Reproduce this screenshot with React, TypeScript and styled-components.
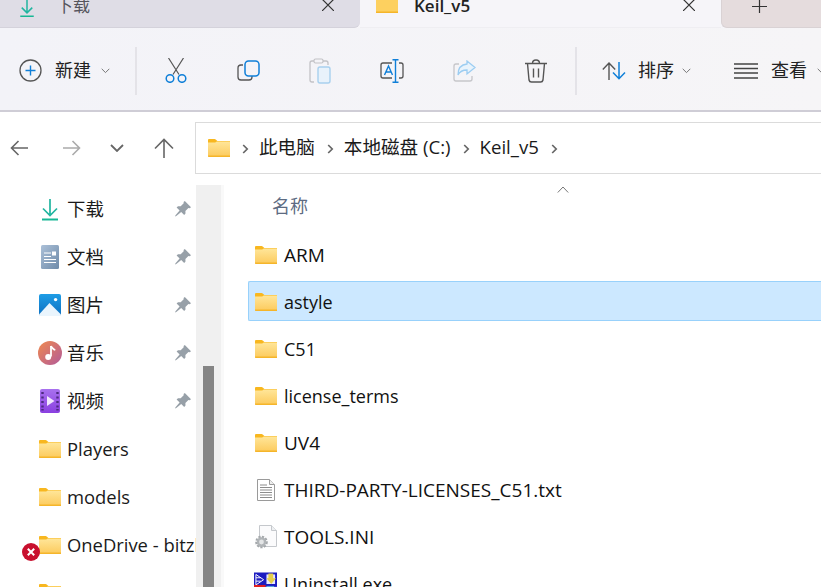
import styled, { createGlobalStyle } from "styled-components";

const Global = createGlobalStyle`
  html, body {
    margin: 0;
    padding: 0;
    background: #fff;
    overflow: hidden;
  }
  * { box-sizing: border-box; }
`;

const Window = styled.div`
  width: 821px;
  height: 587px;
  overflow: hidden;
  font-family: "Open Sans", "Noto Sans CJK SC", sans-serif;
  color: #1a1a1a;
  display: flex;
  flex-direction: column;
`;

const TabBar = styled.div`
  height: 28px;
  flex: none;
  display: flex;
  background: #f6f5f9;
`;

const Tab = styled.div<{ $active?: boolean }>`
  width: ${p => (p.$active ? 361 : 360)}px;
  display: flex;
  align-items: flex-end;
  position: relative;
  background: ${p => (p.$active ? "#f6f5f9" : "#dfdde6")};
  border-bottom-right-radius: ${p => (p.$active ? 0 : 6)}px;
  border-bottom: ${p => (p.$active ? "1px solid #efeef2" : "1px solid #d4d2db")};
  padding: 0 0 10px ${p => (p.$active ? 16 : 18)}px;
`;

const TabTitle = styled.span<{ $active?: boolean }>`
  font-size: 17px;
  line-height: 22px;
  margin-left: ${p => (p.$active ? 16 : 20)}px;
  font-weight: ${p => (p.$active ? 600 : 400)};
  color: ${p => (p.$active ? "#222" : "#55545c")};
`;

const TabFolder = styled.svg`
  margin-bottom: 4px;
`;

const TabClose = styled.svg`
  position: absolute;
  right: 26px;
  top: 0;
`;

const NewTab = styled.div`
  flex: 1;
  background: #e5dcdd;
  border-bottom-left-radius: 6px;
  border-bottom: 1px solid #d9d2d4;
  border-left: 1px solid #d9d2d4;
  padding-left: 30px;
  line-height: 0;
`;

const Toolbar = styled.div`
  height: 84px;
  flex: none;
  display: flex;
  align-items: center;
  background: linear-gradient(90deg, #f3f3f8, #f6f5f7);
  border-bottom: 2px solid #cfcdd6;
  padding: 3px 0 0 19px;
`;

const ToolLabel = styled.span`
  font-size: 18px;
  line-height: 24px;
  color: #222;
  margin-bottom: 2px;
`;

const Chevron = styled.svg`
  margin-left: -3px;
`;

const ToolGroup = styled.div<{ $width: number; $inset?: number; $gap?: number }>`
  width: ${p => p.$width}px;
  display: flex;
  align-items: center;
  gap: ${p => p.$gap ?? 13}px;
  flex: none;
  padding-left: ${p => p.$inset ?? 0}px;
`;

const Divider = styled.div`
  width: 2px;
  height: 48px;
  background: #e4e3e8;
  flex: none;
`;

const ToolIcon = styled.div<{ $width: number }>`
  width: ${p => p.$width}px;
  flex: none;
  display: flex;
  justify-content: center;
`;

const NavRow = styled.div`
  height: 63px;
  flex: none;
  display: flex;
  align-items: flex-start;
  padding-top: 10px;
`;

const NavButtons = styled.div`
  width: 195px;
  height: 52px;
  flex: none;
  display: flex;
  align-items: center;
  padding-left: 10px;
`;

const NavButton = styled.div<{ $width: number; $inset?: number }>`
  width: ${p => p.$width}px;
  flex: none;
  display: flex;
  align-items: center;
  padding-left: ${p => p.$inset ?? 0}px;
`;

const Breadcrumb = styled.div`
  flex: 1;
  height: 52px;
  border: 1px solid #dbdbdb;
  border-right: none;
  display: flex;
  align-items: center;
  padding-left: 12px;
  font-size: 18.6px;
`;

const CrumbText = styled.span`
  line-height: 24px;
  color: #1a1a1a;
  margin-bottom: 2px;
`;

const CrumbArrow = styled.svg`
  margin: 2px 10px 0 12px;
  flex: none;
`;

const Crumb = styled.span`
  display: contents;
`;

const Body = styled.div`
  flex: 1;
  min-height: 0;
  display: flex;
  padding-top: 10px;
`;

const Sidebar = styled.div`
  width: 196px;
  flex: none;
  overflow: hidden;
`;

const NavItem = styled.div`
  height: 48px;
  display: flex;
  align-items: center;
  position: relative;
  padding-left: 38px;
  font-size: 18.4px;
  white-space: nowrap;
`;

const NavLabel = styled.span`
  margin-bottom: 2px;
`;

const NavIconBox = styled.div`
  width: 24px;
  height: 24px;
  flex: none;
  display: flex;
  align-items: center;
  justify-content: center;
  margin-right: 5px;
`;

const PinBox = styled.svg`
  position: absolute;
  left: 175px;
  top: 16px;
`;

const ErrorBadge = styled.svg`
  position: absolute;
  left: 22px;
  top: 22px;
`;

const Scrollbar = styled.div`
  width: 25px;
  flex: none;
  background: #f0f0f0;
  padding: 181px 7px 0;
`;

const ScrollThumb = styled.div`
  height: 100%;
  background: #858585;
`;

const Gutter = styled.div`
  width: 3px;
  flex: none;
  background: #f9f9f9;
`;

const FileArea = styled.div`
  flex: 1;
  min-width: 0;
  padding-left: 24px;
`;

const ColumnHeader = styled.div`
  height: 49px;
  position: relative;
  padding: 9px 0 0 24px;
  font-size: 18px;
  line-height: 24px;
  color: #5d6b82;
`;

const SortCaret = styled.svg`
  position: absolute;
  left: 309px;
  top: 1px;
`;

const FileRow = styled.div<{ $selected?: boolean }>`
  height: 40px;
  margin-bottom: 7px;
  display: flex;
  align-items: center;
  padding: 2px 0 0 5px;
  white-space: nowrap;
  border-radius: 2px 0 0 2px;
  border: 1px solid ${p => (p.$selected ? "#98d1fb" : "transparent")};
  border-right: none;
  background: ${p => (p.$selected ? "#cce8ff" : "transparent")};
  color: #111;
`;

const FileName = styled.span<{ $caps?: boolean }>`
  font-size: ${p => (p.$caps ? 19 : 18)}px;
`;

const FileIconBox = styled.div`
  width: 23px;
  flex: none;
  margin-right: 7px;
  display: flex;
  justify-content: center;
`;

const FolderIcon = () => (
  <svg width="22" height="18" viewBox="0 0 22 18">
    <defs>
      <linearGradient id="fld" x1="0" y1="0" x2="0" y2="1">
        <stop offset="0" stopColor="#ffe69a" />
        <stop offset="1" stopColor="#fccb5e" />
      </linearGradient>
    </defs>
    <path d="M0 1.200C0 .5.5 0 1.200 0h5.400c.5 0 .8.2 1.100.5L9.400 2H22v2H0z" fill="#f8b71f" />
    <path d="M0 3.400h7.200l1.600-1H22v15H1c-.6 0-1-.4-1-1z" fill="url(#fld)" />
    <path d="M0 16.400h22V18H1c-.6 0-1-.4-1-1z" fill="#f5b52a" />
  </svg>
);

const DownloadIcon = ({ size = 24 }: { size?: number }) => (
  <svg width={size} height={size} viewBox="0 0 24 24" fill="none" strokeWidth="1.700">
    <path d="M12 2v16M5 11.500l7 7 7-7" stroke="#22b5a0" />
    <path d="M4 22.500h16" stroke="#17b794" strokeWidth="2" />
  </svg>
);

const DocIcon = () => (
  <svg width="18" height="24" viewBox="0 0 18 24">
    <defs>
      <linearGradient id="doc" x1="0" y1="0" x2="1" y2="1">
        <stop offset="0" stopColor="#abc0d8" />
        <stop offset="1" stopColor="#6f8ba9" />
      </linearGradient>
    </defs>
    <rect width="18" height="24" rx="1.500" fill="url(#doc)" />
    <path d="M3 8h7M3 11.500h7M3 14.500h12M3 17.500h12" stroke="#fff" strokeWidth="1" />
    <rect x="11" y="6.500" width="4" height="4" fill="#fff" />
  </svg>
);

const PictureIcon = () => (
  <svg width="22" height="22" viewBox="0 0 22 22">
    <defs>
      <linearGradient id="pic" x1="0" y1="0" x2="0" y2="1">
        <stop offset="0" stopColor="#1f9de6" />
        <stop offset="1" stopColor="#0c6fc0" />
      </linearGradient>
    </defs>
    <rect width="22" height="22" rx="2" fill="url(#pic)" />
    <circle cx="16.600" cy="5.600" r="1.700" fill="#fff" />
    <path d="M0 20.500L10.500 9 22 20.500V22H0z" fill="#eaf5fd" />
  </svg>
);

const MusicIcon = () => (
  <svg width="24" height="24" viewBox="0 0 24 24">
    <defs>
      <linearGradient id="mus" x1="0" y1="0" x2="1" y2="1">
        <stop offset="0" stopColor="#f08a4e" />
        <stop offset="1" stopColor="#b25a9a" />
      </linearGradient>
    </defs>
    <circle cx="12" cy="12" r="12" fill="url(#mus)" />
    <path d="M13 5v10.500" stroke="#fff" strokeWidth="1.800" />
    <path d="M13 5c.6 2.400 3 2.600 4 4.400" stroke="#fff" strokeWidth="1.800" fill="none" />
    <circle cx="10.200" cy="16" r="3" fill="#fff" />
  </svg>
);

const VideoIcon = () => (
  <svg width="20" height="24" viewBox="0 0 20 24">
    <defs>
      <linearGradient id="vid" x1="0" y1="0" x2="0" y2="1">
        <stop offset="0" stopColor="#a871ee" />
        <stop offset="1" stopColor="#8a3fe0" />
      </linearGradient>
    </defs>
    <rect width="20" height="24" rx="2" fill="url(#vid)" />
    <path d="M7 7l7.500 5L7 17z" fill="#f1e6fd" />
    <path d="M2.500 3v2M2.500 7.500v2M2.500 12v2M2.500 16.500v2M2.500 20v1.500M17.500 3v2M17.500 7.500v2M17.500 12v2M17.500 16.500v2M17.500 20v1.500" stroke="#4d2a80" strokeWidth="2.400" />
  </svg>
);

const PinIcon = () => (
  <PinBox width="16" height="16" viewBox="0 0 16 16">
    <path d="M9.800 0L16 6.200l-1.300 1-1.300-.3-3 3 .1 2.700-1.300 1.300-3-3L1.300 15 0 15.500l.5-1.300 4.100-4.600-3-3L3 5.200l2.700.1 3-3L8.600 1z" fill="#97a0a8" />
  </PinBox>
);

const TextFileIcon = () => (
  <svg width="18" height="22" viewBox="0 0 18 22">
    <path d="M.5.5h12l5 5v16H.5z" fill="#fff" stroke="#9a9a9a" />
    <path d="M12.500.5v5h5" fill="#eee" stroke="#9a9a9a" />
    <path d="M3 6h7M3 8.500h12M3 11h12M3 13.500h12M3 16h12M3 18.500h12" stroke="#8c8c8c" />
  </svg>
);

const IniFileIcon = () => (
  <svg width="22" height="24" viewBox="0 0 22 24">
    <path d="M4.500.5h12l5 5v16h-17z" fill="#fbfbfc" stroke="#c5c8cc" />
    <path d="M16.500.5v5h5" fill="#eef0f2" stroke="#c5c8cc" />
    <circle cx="6.500" cy="17" r="4.800" fill="none" stroke="#a3a7aa" strokeWidth="3" strokeDasharray="2 1.200" />
    <circle cx="6.500" cy="17" r="3.600" fill="#e3e5e6" stroke="#b0b4b7" strokeWidth="2.400" />
  </svg>
);

const UninstallIcon = () => (
  <svg width="24" height="24" viewBox="0 0 24 24">
    <rect width="24" height="15" fill="#1c1cc0" />
    <path d="M2 2l8 5.500L2 13z" fill="none" stroke="#fff" />
    <path d="M2 5.500h5M2 9h5" stroke="#fff" />
    <rect x="13" y="2" width="9" height="10" fill="#e8e8ff" />
    <path d="M15 1h5v5h3l-5 6-5-6h2z" fill="#e6d04a" />
    <rect y="13" width="12" height="4" fill="#e02020" />
    <rect x="13" y="14" width="8" height="5" fill="#59a8dc" />
  </svg>
);

const ChevronDown = () => (
  <Chevron width="9" height="6" viewBox="0 0 9 6" fill="none" stroke="#777" strokeWidth="1">
    <path d="M.7.8l3.800 3.800L8.300.8" />
  </Chevron>
);

const sideItems = [
  { label: "下载", icon: <DownloadIcon />, pinned: true },
  { label: "文档", icon: <DocIcon />, pinned: true },
  { label: "图片", icon: <PictureIcon />, pinned: true },
  { label: "音乐", icon: <MusicIcon />, pinned: true },
  { label: "视频", icon: <VideoIcon />, pinned: true },
  { label: "Players", icon: <FolderIcon /> },
  { label: "models", icon: <FolderIcon /> },
  { label: "OneDrive - bitzhuwei", icon: <FolderIcon />, error: true },
  { label: "Pictures", icon: <FolderIcon /> },
];

const files = [
  { name: "ARM", icon: <FolderIcon />, caps: true },
  { name: "astyle", icon: <FolderIcon />, selected: true },
  { name: "C51", icon: <FolderIcon /> },
  { name: "license_terms", icon: <FolderIcon /> },
  { name: "UV4", icon: <FolderIcon />, caps: true },
  { name: "THIRD-PARTY-LICENSES_C51.txt", icon: <TextFileIcon />, caps: true },
  { name: "TOOLS.INI", icon: <IniFileIcon />, caps: true },
  { name: "Uninstall.exe", icon: <UninstallIcon /> },
];

const crumbs = ["此电脑", "本地磁盘 (C:)", "Keil_v5"];

const Arrow = () => (
  <CrumbArrow width="7" height="10" viewBox="0 0 7 10" fill="none" stroke="#666" strokeWidth="1.700">
    <path d="M1.200 1l4 4-4 4" />
  </CrumbArrow>
);

export default function App() {
  return (
    <Window>
      <Global />
      <TabBar>
        <Tab>
          <svg width="18" height="18" viewBox="0 0 24 24" fill="none" strokeWidth="2">
            <path d="M12 0v18M5 11.500l7 7 7-7" stroke="#22b5a0" />
            <path d="M3 23h18" stroke="#17b794" />
          </svg>
          <TabTitle>下载</TabTitle>
          <TabClose width="12" height="11" viewBox="0 0 12 11" stroke="#333" strokeWidth="1.200">
            <path d="M0-1l12 12M12-1L0 11" />
          </TabClose>
        </Tab>
        <Tab $active>
          <TabFolder width="22" height="13" viewBox="0 0 22 13">
            <path d="M0 0h22v13H0z" fill="#fdd05f" />
            <path d="M0 11.500h22V13H0z" fill="#f5b52a" />
          </TabFolder>
          <TabTitle $active>Keil_v5</TabTitle>
          <TabClose width="12" height="11" viewBox="0 0 12 11" stroke="#333" strokeWidth="1.200">
            <path d="M0-1l12 12M12-1L0 11" />
          </TabClose>
        </Tab>
        <NewTab>
          <svg width="15" height="14" viewBox="0 0 15 14" stroke="#333" strokeWidth="1.200">
            <path d="M7.500 0v13M0 6.500h15" />
          </svg>
        </NewTab>
      </TabBar>

      <Toolbar>
        <ToolGroup $width={116}>
          <svg width="23" height="23" viewBox="0 0 23 23" fill="none">
            <circle cx="11.500" cy="11.500" r="10.500" stroke="#555" strokeWidth="1.300" />
            <path d="M11.500 6.500v10M6.500 11.500h10" stroke="#0f7fd8" strokeWidth="1.400" />
          </svg>
          <ToolLabel>新建</ToolLabel>
          <ChevronDown />
        </ToolGroup>
        <Divider />
        <ToolIcon $width={78}>
          <svg width="22" height="25" viewBox="0 0 22 25" fill="none">
            <path d="M3.500 0L14 16.500M18.500 0L8 16.500" stroke="#555" strokeWidth="1.200" />
            <circle cx="5" cy="20.500" r="3.800" stroke="#0f7fd8" strokeWidth="1.500" />
            <circle cx="17" cy="20.500" r="3.800" stroke="#0f7fd8" strokeWidth="1.500" />
          </svg>
        </ToolIcon>
        <ToolIcon $width={66}>
          <svg width="23" height="21" viewBox="0 0 23 21" fill="none">
            <path d="M6 5H4a3 3 0 0 0-3 3v9a3 3 0 0 0 3 3h8a3 3 0 0 0 3-3v-1" stroke="#555" strokeWidth="1.300" />
            <rect x="8" y="1" width="14" height="15" rx="3.500" stroke="#0f7fd8" strokeWidth="1.500" />
          </svg>
        </ToolIcon>
        <ToolIcon $width={78}>
          <svg width="22" height="26" viewBox="0 0 22 26" fill="none">
            <path d="M5 3H3a2 2 0 0 0-2 2v17a2 2 0 0 0 2 2h2" stroke="#c2c2c6" strokeWidth="1.300" />
            <path d="M14 3h3a2 2 0 0 1 2 2v2" stroke="#c2c2c6" strokeWidth="1.300" />
            <rect x="5" y="1" width="9" height="4" rx="1.500" stroke="#c2c2c6" strokeWidth="1.200" />
            <rect x="9" y="9" width="12" height="16" rx="2" stroke="#a8d0ee" strokeWidth="1.400" fill="#e8f2fb" />
          </svg>
        </ToolIcon>
        <ToolIcon $width={66}>
          <svg width="24" height="24" viewBox="0 0 24 24" fill="none">
            <path d="M12 4H3a2 2 0 0 0-2 2v11a2 2 0 0 0 2 2h9M19 4h2a2 2 0 0 1 2 2v11a2 2 0 0 1-2 2h-2" stroke="#555" strokeWidth="1.300" />
            <path d="M4.500 16L8.500 7l4 9M6 13h5.200M15.500 0v24M12.500.7h6M12.500 23.300h6" stroke="#0f7fd8" strokeWidth="1.400" />
          </svg>
        </ToolIcon>
        <ToolIcon $width={78}>
          <svg width="23" height="22" viewBox="0 0 23 22" fill="none">
            <path d="M6 4H3a2 2 0 0 0-2 2v13a2 2 0 0 0 2 2h14a2 2 0 0 0 2-2v-3" stroke="#c6c6ca" strokeWidth="1.300" />
            <path d="M14 1l8 6.500-8 6.500V10C9 10 6.500 12 5 15c0-6 3-10.500 9-11z" stroke="#9ccdf2" strokeWidth="1.300" fill="#e8f3fc" />
          </svg>
        </ToolIcon>
        <ToolIcon $width={66}>
          <svg width="22" height="24" viewBox="0 0 22 24" fill="none" stroke="#555" strokeWidth="1.400">
            <path d="M0 4.500h22M7.500 4.500c0-2 1.500-3.500 3.500-3.500s3.500 1.500 3.500 3.500M2.500 4.500L4 21a2.500 2.500 0 0 0 2.500 2h9A2.500 2.500 0 0 0 18 21l1.500-16.500M8.500 9.500v9M13.500 9.500v9" />
          </svg>
        </ToolIcon>
        <ToolIcon $width={6} />
        <Divider />
        <ToolGroup $width={157} $inset={25} $gap={11}>
          <svg width="25" height="18" viewBox="0 0 25 18" fill="none">
            <path d="M7 18V1M.8 7.500L7 1l6.200 6.500" stroke="#555" strokeWidth="1.400" />
            <path d="M17 0v17M11 10.500l6 6.200 6-6.200" stroke="#0f7fd8" strokeWidth="1.500" />
          </svg>
          <ToolLabel>排序</ToolLabel>
          <ChevronDown />
        </ToolGroup>
        <ToolGroup $width={100}>
          <svg width="24" height="16" viewBox="0 0 24 16" stroke="#444" strokeWidth="1.300">
            <path d="M0 1h24M0 5.500h24M0 10h24M0 15h24" />
          </svg>
          <ToolLabel>查看</ToolLabel>
          <ChevronDown />
        </ToolGroup>
      </Toolbar>

      <NavRow>
        <NavButtons>
          <NavButton $width={44}>
            <svg width="18" height="16" viewBox="0 0 18 16" fill="none" stroke="#666" strokeWidth="1.600">
              <path d="M18 8H1M8.500 1L1.500 8l7 7" />
            </svg>
          </NavButton>
          <NavButton $width={56} $inset={9}>
            <svg width="18" height="16" viewBox="0 0 18 16" fill="none" stroke="#ababab" strokeWidth="1.600">
              <path d="M0 8h17M9.500 1l7 7-7 7" />
            </svg>
          </NavButton>
          <NavButton $width={44}>
            <svg width="14" height="8" viewBox="0 0 14 8" fill="none" stroke="#666" strokeWidth="1.800">
              <path d="M1 1l6 6 6-6" />
            </svg>
          </NavButton>
          <NavButton $width={20}>
            <svg width="20" height="20" viewBox="0 0 20 20" fill="none" stroke="#666" strokeWidth="1.600">
              <path d="M10 20V1.500M1 10.500l9-9 9 9" />
            </svg>
          </NavButton>
        </NavButtons>
        <Breadcrumb>
          <FolderIcon />
          {crumbs.map(c => (
            <Crumb key={c}>
              <Arrow />
              <CrumbText>{c}</CrumbText>
            </Crumb>
          ))}
          <Arrow />
        </Breadcrumb>
      </NavRow>

      <Body>
        <Sidebar>
          {sideItems.map(item => (
            <NavItem key={item.label}>
              <NavIconBox>{item.icon}</NavIconBox>
              <NavLabel>{item.label}</NavLabel>
              {item.pinned && <PinIcon />}
              {item.error && (
                <ErrorBadge width="18" height="18" viewBox="0 0 18 18">
                  <circle cx="9" cy="9" r="9" fill="#c8102e" />
                  <path d="M5.800 5.800l6.400 6.400M12.200 5.800l-6.400 6.400" stroke="#fff" strokeWidth="2" />
                </ErrorBadge>
              )}
            </NavItem>
          ))}
        </Sidebar>
        <Scrollbar>
          <ScrollThumb />
        </Scrollbar>
        <Gutter />
        <FileArea>
          <ColumnHeader>
            名称
            <SortCaret width="12" height="7" viewBox="0 0 12 7" fill="none" stroke="#777" strokeWidth="1">
              <path d="M.800 6.500L6 1l5.200 5.500" />
            </SortCaret>
          </ColumnHeader>
          {files.map(f => (
            <FileRow key={f.name} $selected={f.selected}>
              <FileIconBox>{f.icon}</FileIconBox>
              <FileName $caps={f.caps}>{f.name}</FileName>
            </FileRow>
          ))}
        </FileArea>
      </Body>
    </Window>
  );
}
